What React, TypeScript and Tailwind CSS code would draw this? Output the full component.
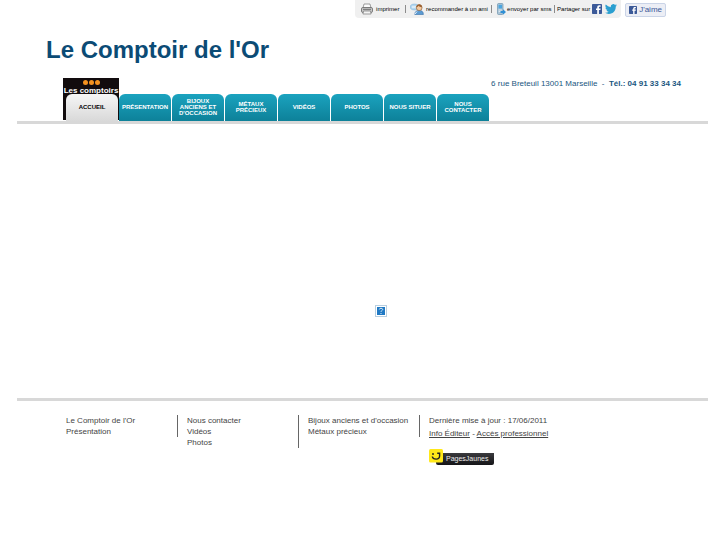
import React from 'react'

const tabs = [
  { name: "PRÉSENTATION", to: "#presentation" },
  { name: "BIJOUX ANCIENS ET D'OCCASION", to: "#bijoux" },
  { name: "MÉTAUX PRÉCIEUX", to: "#metaux" },
  { name: "VIDÉOS", to: "#videos" },
  { name: "PHOTOS", to: "#photos" },
  { name: "NOUS SITUER", to: "#situer" },
  { name: "NOUS CONTACTER", to: "#contact" },
]

const footerColumns = [
  {
    id: 1,
    className: "h-[22px]",
    links: [
      { name: "Le Comptoir de l'Or", to: "#accueil" },
      { name: "Présentation", to: "#presentation" },
    ]
  },
  {
    id: 2,
    className: "h-[33px]",
    links: [
      { name: "Nous contacter", to: "#contact" },
      { name: "Vidéos", to: "#videos" },
      { name: "Photos", to: "#photos" },
    ]
  },
  {
    id: 3,
    className: "h-[22px]",
    links: [
      { name: "Bijoux anciens et d'occasion", to: "#bijoux" },
      { name: "Métaux précieux", to: "#metaux" },
    ]
  },
]

const PrinterIcon = () => (
  <svg width="12" height="12" viewBox="0 0 12 12">
    <path d="M3 1h6l1 4H2z" fill="#fafafa" stroke="#777" strokeWidth="0.7" />
    <rect x="0.5" y="4.5" width="11" height="5" rx="1.4" fill="#c9c9c9" stroke="#666" strokeWidth="0.8" />
    <path d="M2 6.3h8" stroke="#555" strokeWidth="0.8" />
    <path d="M2.5 8h7l0.6 3H1.9z" fill="#f4f4f4" stroke="#777" strokeWidth="0.7" />
  </svg>
)

const RecommendIcon = () => (
  <svg width="14" height="12" viewBox="0 0 14 12">
    <ellipse cx="4.5" cy="4" rx="4.2" ry="2.9" fill="#b5d8f0" stroke="#7fb2d8" strokeWidth="0.6" />
    <path d="M2 4h4" stroke="#fff" strokeWidth="1" />
    <path d="M4.8 11.5c0-3 2-4.2 4.3-4.2s4.3 1.2 4.3 4.2z" fill="#5c9bd2" stroke="#356fa8" strokeWidth="0.6" />
    <circle cx="9.2" cy="4.7" r="2.9" fill="#f3c9a0" stroke="#8a5a33" strokeWidth="0.6" />
    <path d="M6.3 4.4c0-4.3 5.8-4.3 5.8 0-2-.2-3-.9-3.6-1.6-.4.9-1.2 1.4-2.2 1.6z" fill="#9a6030" />
    <path d="M5 11l2-2.5" stroke="#fff" strokeWidth="0.9" />
  </svg>
)

const PhoneIcon = () => (
  <svg width="10" height="12" viewBox="0 0 10 12">
    <rect x="1.5" y="0.5" width="5.5" height="11" rx="1" fill="#aac4d6" stroke="#6d93ad" strokeWidth="0.7" />
    <rect x="2.5" y="1.8" width="3.5" height="3.7" fill="#4ba5df" />
    <path d="M2.7 7h3M2.7 8.5h3" stroke="#eef5fa" strokeWidth="0.7" />
    <path d="M4.5 8h2.5v-1.8l3 2.8-3 2.8V10H4.5z" fill="#2f8fd4" />
  </svg>
)

const FacebookIcon = ({ className }: { className: string }) => (
  <svg className={className} viewBox="0 0 10 10">
    <rect width="10" height="10" rx="0.8" fill="#3b5998" />
    <path d="M5.2 10V6H4V4.5h1.2V3.4C5.2 2 6 1.3 7.3 1.3h1.3v1.5h-.9c-.6 0-.8.3-.8.8v.9h1.7L8.400 6H6.900v4z" fill="#fff" />
  </svg>
)

const TwitterIcon = () => (
  <svg width="12" height="10" viewBox="0 0 24 20">
    <path
      d="M23.900 2.600a9.800 9.800 0 0 1-2.800.8A4.900 4.900 0 0 0 23.200.7a9.900 9.900 0 0 1-3.100 1.200 4.900 4.900 0 0 0-8.400 4.500A14 14 0 0 1 1.600 1.200a4.900 4.900 0 0 0 1.500 6.600 4.900 4.900 0 0 1-2.200-.6v.1a4.900 4.900 0 0 0 4 4.800 5 5 0 0 1-2.200.1 4.900 4.900 0 0 0 4.600 3.400A9.900 9.900 0 0 1 0 17.600a14 14 0 0 0 7.500 2.200c9.100 0 14-7.500 14-14v-.6a10 10 0 0 0 2.400-2.600z"
      fill="#2a9fd0"
    />
  </svg>
)

const Separator = () => <span className="w-px h-2 bg-[#8c8c8c]"></span>

const App = () => {

  function renderToolbar() {
    return (
      <div className="flex items-start justify-end gap-1 pr-[42px] text-[6px] leading-[8px] text-black">
        <div className="flex items-center h-[18px] pl-1.5 pr-1 bg-[#f0f0f0] rounded-b-sm whitespace-nowrap">
          <button className="flex items-center gap-[3px] w-11"><PrinterIcon />imprimer</button>
          <Separator />
          <button className="flex items-center gap-[2px] w-[85px] pl-1"><RecommendIcon />recommander à un ami</button>
          <Separator />
          <button className="flex items-center gap-px w-[62px] pl-1"><PhoneIcon />envoyer par sms</button>
          <Separator />
          <span className="pl-[2px] pr-[2px]">Partager sur</span>
          <a href="#facebook" aria-label="Facebook"><FacebookIcon className="w-[10px] h-[10px]" /></a>
          <a href="#twitter" aria-label="Twitter" className="ml-[3px]"><TwitterIcon /></a>
        </div>
        <button className="flex items-center gap-[2px] h-[14px] mt-[3px] px-[3px] border border-[#cad4e7] rounded-xs bg-[#eceef5] text-[8px] text-[#3b5998]">
          <FacebookIcon className="w-2 h-2" />J'aime
        </button>
      </div>
    )
  }

  function renderTabs() {
    return (
      <nav className="relative flex gap-px pl-[49px] text-[6px] leading-[6px] font-bold text-center">
        <div className="absolute left-[46px] -top-4 w-14 h-[42px] pt-[2px] bg-[#120c0e] text-white">
          <div className="flex justify-center gap-px">
            <span className="w-[5px] h-[5px] bg-[#f39220] rounded-full"></span>
            <span className="w-[5px] h-[5px] bg-[#f39220] rounded-full"></span>
            <span className="w-[5px] h-[5px] bg-[#f39220] rounded-full"></span>
          </div>
          <span className="flex justify-center mt-px text-[8px] leading-[10px] whitespace-nowrap">Les comptoirs</span>
        </div>
        <a href="#accueil" className="relative flex items-center justify-center w-[52px] h-[27px] pb-px rounded-t-md bg-linear-to-b from-[#f6f6f6] to-[#d9d9d9] text-black">
          ACCUEIL
        </a>
        {tabs.map(tab => (
          <a
            key={tab.name}
            href={tab.to}
            className="relative flex items-center justify-center w-[52px] h-[27px] px-1 pb-px rounded-t-md bg-linear-to-b from-[#1ba3bf] to-[#0d8199] text-white"
          >
            {tab.name}
          </a>
        ))}
      </nav>
    )
  }

  function renderFooter() {
    return (
      <footer className="flex items-start pt-[14px] pl-[49px] pb-20 text-[8px] leading-[11px] text-[#444]">
        {footerColumns.map(column => (
          <div key={column.id} className="flex w-[121px]">
            <ul className="flex-1 whitespace-nowrap">
              {column.links.map(link => (
                <li key={link.name}><a href={link.to}>{link.name}</a></li>
              ))}
            </ul>
            <span className={`w-px mr-[9px] bg-[#666] ${column.className}`}></span>
          </div>
        ))}
        <div className="whitespace-nowrap">
          <p>Dernière mise à jour : 17/06/2011</p>
          <p className="mt-[2px]">
            <a href="#editeur" className="underline">Info Éditeur</a> - <a href="#pro" className="underline">Accès professionnel</a>
          </p>
          <a href="#pagesjaunes" className="relative flex mt-[14px] pl-[7px]">
            <span className="w-[58px] h-3 pl-[10px] rounded-b-xs bg-linear-to-b from-[#3a3a3e] to-[#151518] text-[7px] leading-[12px] text-[#eee]">
              PagesJaunes
            </span>
            <svg className="absolute left-0 -top-1 w-[14px] h-[14px]" viewBox="0 0 14 14">
              <rect width="14" height="13.5" rx="1.5" fill="#ffe81a" />
              <rect x="3" y="4.3" width="2" height="1.4" fill="#222" />
              <path d="M3.3 7.5c.6 3.500 7.300 3.700 7.300-.4V4.200H8.200" fill="none" stroke="#222" strokeWidth="1.4" />
            </svg>
          </a>
        </div>
      </footer>
    )
  }

  return (
    <div className="min-h-screen pl-[17px] pr-[19px] bg-white font-['Liberation_Sans',sans-serif]">
      <header>
        {renderToolbar()}
        <h1 className="mt-[17px] pl-[29px] text-[24px] leading-[30px] font-bold text-[#0b4b75]">Le Comptoir de l'Or</h1>
        <p className="mt-[13px] mb-[5px] pr-[27px] text-right text-[8px] leading-[11px] text-[#1a5680] whitespace-pre">
          6 rue Breteuil 13001 Marseille  -  <b>Tél.: 04 91 33 34 34</b>
        </p>
        {renderTabs()}
      </header>
      <main className="flex justify-center pt-[181px] pb-[81px] pl-9 border-y-3 border-[#d8d8d8]">
        <svg width="12" height="12" viewBox="0 0 12 12" role="img" aria-label="Contenu manquant">
          <rect x="0.5" y="0.5" width="11" height="11" fill="#fff" stroke="#b9cfe0" />
          <rect x="2" y="2" width="8" height="8" fill="#2079c4" />
          <path d="M4.3 4.5c0-1.7 3.4-1.7 3.4 0 0 1-1.7 1-1.7 2.3M6 8v1" fill="none" stroke="#dcecf8" strokeWidth="1" />
        </svg>
      </main>
      {renderFooter()}
    </div>
  )
}

export default App
